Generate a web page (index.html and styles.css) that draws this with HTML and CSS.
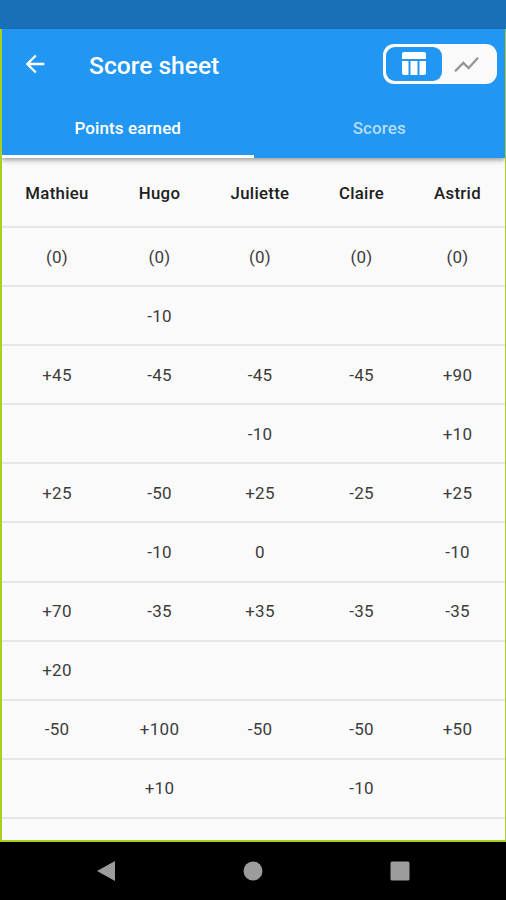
FILE: index.html
```html
<!DOCTYPE html>
<html lang="en">
<head>
    <meta charset="UTF-8">
    <meta name="viewport" content="width=device-width, initial-scale=1.0">
    <title>Score sheet</title>
    <link rel="stylesheet" href="styles.css">
</head>
<body>
    <div class="status-bar"></div>

    <div class="app">
        <header class="app-bar">
            <div class="toolbar">
                <svg class="back-icon" viewBox="0 0 24 24"><path d="M20 11H7.83l5.59-5.59L12 4l-8 8 8 8 1.41-1.41L7.83 13H20v-2z"/></svg>
                <h1 class="title">Score sheet</h1>
                <div class="toggle">
                    <span class="toggle-item active">
                        <svg class="table-icon" viewBox="0 0 24 24">
                            <path d="M2 0h20a2 2 0 0 1 2 2v5H0V2a2 2 0 0 1 2-2zM0 9h6.500v14H2a2 2 0 0 1-2-2zM8.500 9h7v14h-7zM17.500 9H24v12a2 2 0 0 1-2 2h-4.500z"/>
                        </svg>
                    </span>
                    <span class="toggle-item">
                        <svg class="chart-icon" viewBox="0 0 24 16"><path d="M1 14.500l8-8 5 5L23 1.500"/></svg>
                    </span>
                </div>
            </div>
            <nav class="tabs">
                <span class="tab active">Points earned</span>
                <span class="tab">Scores</span>
            </nav>
        </header>

        <main class="sheet">
            <div class="row names"><span>Mathieu</span><span>Hugo</span><span>Juliette</span><span>Claire</span><span>Astrid</span></div>
            <div class="row"><span>(0)</span><span>(0)</span><span>(0)</span><span>(0)</span><span>(0)</span></div>
            <div class="row"><span></span><span>-10</span><span></span><span></span><span></span></div>
            <div class="row"><span>+45</span><span>-45</span><span>-45</span><span>-45</span><span>+90</span></div>
            <div class="row"><span></span><span></span><span>-10</span><span></span><span>+10</span></div>
            <div class="row"><span>+25</span><span>-50</span><span>+25</span><span>-25</span><span>+25</span></div>
            <div class="row"><span></span><span>-10</span><span>0</span><span></span><span>-10</span></div>
            <div class="row"><span>+70</span><span>-35</span><span>+35</span><span>-35</span><span>-35</span></div>
            <div class="row"><span>+20</span><span></span><span></span><span></span><span></span></div>
            <div class="row"><span>-50</span><span>+100</span><span>-50</span><span>-50</span><span>+50</span></div>
            <div class="row"><span></span><span>+10</span><span></span><span>-10</span><span></span></div>
        </main>
    </div>

    <footer class="nav-bar">
        <svg class="nav-icon" viewBox="0 0 20 22"><path d="M1 11L19 1v20z"/></svg>
        <svg class="nav-icon" viewBox="0 0 20 22"><circle cx="10" cy="11" r="9.500"/></svg>
        <svg class="nav-icon" viewBox="0 0 20 22"><rect x="0.500" y="1.500" width="19" height="19" rx="1.500"/></svg>
    </footer>
</body>
</html>
```

FILE: styles.css
```css
:root {
    --primary: #2196f3;
    --primary-dark: #1a70b7;
    --surface: #fafafa;
    --divider: #e6e6e6;
    --frame: #a8cf22;
}

* {
    margin: 0;
    padding: 0;
    box-sizing: border-box;
}

body {
    display: flex;
    flex-direction: column;
    width: 506px;
    height: 900px;
    overflow: hidden;
    background-color: #000;
    font-family: Roboto, sans-serif;
}

.status-bar {
    height: 29px;
    background-color: var(--primary-dark);
}

.app {
    height: 813px;
    border: solid var(--frame);
    border-width: 0 1px 2px 2px;
    background-color: var(--surface);
    overflow: hidden;
}

/* App bar */
.app-bar {
    height: 129px;
    background-color: var(--primary);
    box-shadow: 0 2px 5px rgba(0, 0, 0, 0.4);
    color: #fff;
}

.toolbar {
    display: flex;
    align-items: center;
    height: 70px;
    padding: 0 8px 0 19px;
}

.back-icon {
    width: 28px;
    height: 28px;
    fill: #fff;
}

.title {
    margin: 3px 0 0 40px;
    font-size: 24.6px;
    font-weight: 500;
}

.toggle {
    display: flex;
    width: 114px;
    height: 40px;
    margin-left: auto;
    padding: 3px 2px;
    border-radius: 11px;
    background-color: var(--surface);
}

.toggle-item {
    display: flex;
    flex: 1;
    align-items: center;
    justify-content: center;
    border-radius: 9px;
}

.toggle-item.active {
    flex: none;
    width: 56px;
    margin-left: 1px;
    background-color: var(--primary);
}

.table-icon {
    width: 24px;
    height: 24px;
    fill: #fff;
}

.chart-icon {
    width: 25px;
    height: 17px;
    margin-right: 4px;
    fill: none;
    stroke: #949494;
    stroke-width: 2.2;
}

.tabs {
    display: flex;
    height: 59px;
}

.tab {
    flex: 1;
    padding-top: 19px;
    border-bottom: 3px solid transparent;
    color: #b5dcfb;
    font-size: 17px;
    font-weight: 500;
    letter-spacing: 0.1px;
    line-height: 20px;
    text-align: center;
}

.tab.active {
    border-bottom-color: #fff;
    color: #fff;
}

/* Score table */
.row {
    display: grid;
    grid-template-columns: 110px 95px 106px 97px 95px;
    align-items: center;
    height: 59.1px;
    border-bottom: 2px solid var(--divider);
    color: #3c3c3c;
    font-size: 17px;
    letter-spacing: 0.3px;
    text-align: center;
}

.row.names {
    height: 70px;
    padding-top: 2px;
    color: #202020;
    font-size: 16.8px;
    font-weight: 500;
    letter-spacing: 0.3px;
}

/* System navigation */
.nav-bar {
    display: flex;
    flex: 1;
    align-items: center;
    justify-content: space-between;
    padding: 0 96px;
}

.nav-icon {
    width: 20px;
    height: 22px;
    fill: #9c9c9c;
}
```
